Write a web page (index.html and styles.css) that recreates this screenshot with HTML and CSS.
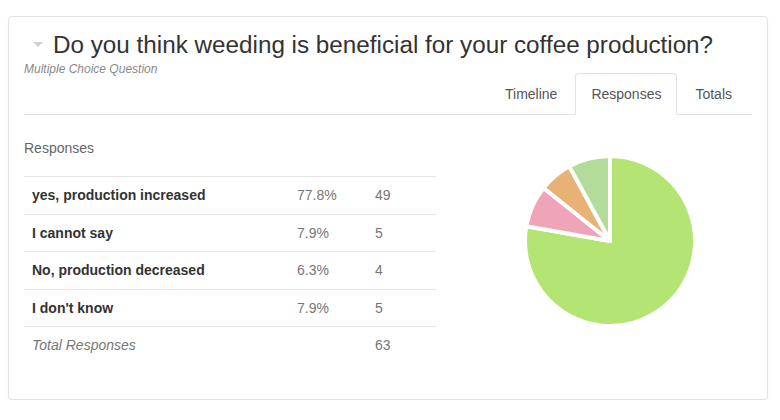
FILE: index.html
```html
<!DOCTYPE html>
<html>
<head>
<meta charset="utf-8">
<link rel="stylesheet" href="styles.css">
</head>
<body>
<div class="card">
  <div class="header">
    <div class="title-row">
      <span class="caret"></span>
      <h1 class="title">Do you think weeding is beneficial for your coffee production?</h1>
    </div>
    <div class="subtitle">Multiple Choice Question</div>
  </div>
  <ul class="tabs">
    <li class="tab">Timeline</li>
    <li class="tab active">Responses</li>
    <li class="tab">Totals</li>
  </ul>
  <div class="content">
    <div class="left">
      <div class="section-label">Responses</div>
      <table class="responses">
        <tr><td class="label">yes, production increased</td><td class="pct">77.8%</td><td class="cnt">49</td></tr>
        <tr><td class="label">I cannot say</td><td class="pct">7.9%</td><td class="cnt">5</td></tr>
        <tr><td class="label">No, production decreased</td><td class="pct">6.3%</td><td class="cnt">4</td></tr>
        <tr><td class="label">I don't know</td><td class="pct">7.9%</td><td class="cnt">5</td></tr>
        <tr class="total"><td class="label">Total Responses</td><td class="pct"></td><td class="cnt">63</td></tr>
      </table>
    </div>
    <div class="right">
      <svg class="pie" width="180" height="180" viewBox="-90 -90 180 180">
        <path d="M0,0 L0,-85 A85,85 0 1 1 -83.71,-14.76 Z" fill="#b4e474"/>
        <path d="M0,0 L-83.71,-14.76 A85,85 0 0 1 -66.45,-53.00 Z" fill="#f0a4b7"/>
        <path d="M0,0 L-66.45,-53.00 A85,85 0 0 1 -40.66,-74.65 Z" fill="#e8b176"/>
        <path d="M0,0 L-40.66,-74.65 A85,85 0 0 1 0,-85 Z" fill="#b3dc9b"/>
      </svg>
    </div>
  </div>
</div>
</body>
</html>
```
FILE: styles.css
```css
html, body {
  margin: 0;
  padding: 0;
  background: #ffffff;
}
body {
  padding: 16px 0 0 8px;
  font-family: "Liberation Sans", Arial, sans-serif;
  color: #333;
}
.card {
  box-sizing: border-box;
  width: 760px;
  height: 384px;
  border: 1px solid #e2e2e2;
  border-radius: 4px;
  box-shadow: 0 1px 2px rgba(0,0,0,0.06);
  padding: 0 15px;
  background: #fff;
}
.header {
  padding-top: 14px;
}
.title-row {
  display: flex;
  align-items: center;
}
.caret {
  width: 0;
  height: 0;
  border-left: 5px solid transparent;
  border-right: 5px solid transparent;
  border-top: 5px solid #d0d0d0;
  margin-left: 9px;
  margin-right: 10px;
  margin-top: -1px;
}
.title {
  margin: 0;
  font-size: 24.25px;
  line-height: 28px;
  font-weight: normal;
  color: #333;
}
.subtitle {
  margin-top: 4px;
  font-size: 12px;
  line-height: 13px;
  font-style: italic;
  color: #888;
}
.tabs {
  list-style: none;
  margin: -3px 0 0 0;
  padding: 0;
  display: flex;
  justify-content: flex-end;
  border-bottom: 1px solid #e2e2e2;
}
.tab {
  font-size: 14px;
  line-height: 20px;
  padding: 10px 15px;
  border: 1px solid transparent;
  border-radius: 4px 4px 0 0;
  margin: 0 2px -1px 0;
  color: #555;
}
.tab:last-child {
  margin-right: 4px;
}
.tab.active {
  border-color: #e2e2e2;
  border-bottom-color: #fff;
  background: #fff;
}
.content {
  display: flex;
}
.left {
  width: 412px;
}
.section-label {
  margin-top: 23px;
  font-size: 14px;
  line-height: 20px;
  color: #666;
}
.responses {
  margin-top: 18px;
  width: 412px;
  border-collapse: collapse;
  font-size: 14px;
}
.responses td {
  border-top: 1px solid #e6e6e6;
  padding: 8px;
  line-height: 20.5px;
}
.responses .label {
  width: 249px;
  font-weight: bold;
  color: #333;
}
.responses .pct {
  width: 62px;
  color: #777;
}
.responses .cnt {
  color: #777;
}
.responses .total .label {
  font-weight: normal;
  font-style: italic;
  color: #777;
}
.right {
  flex: 1;
}
.pie {
  display: block;
  margin: 36px 0 0 84px;
}
.pie path {
  stroke: #fff;
  stroke-width: 4;
  stroke-linejoin: round;
}
```
